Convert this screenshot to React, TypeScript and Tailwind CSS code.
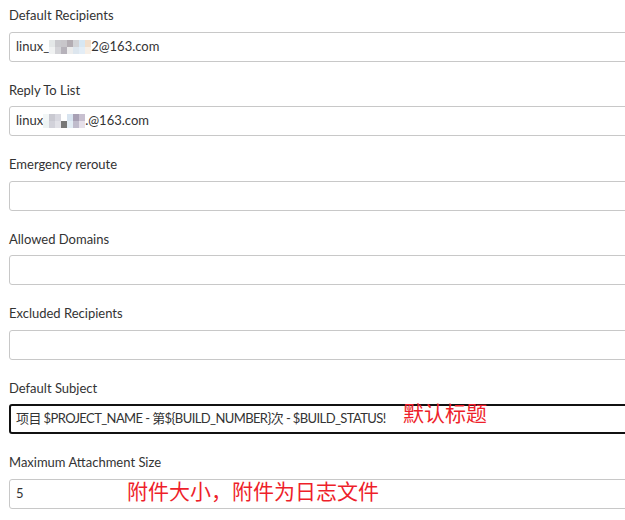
import React from "react";

function Mosaic({ top, bottom }: { top: string[]; bottom: string[] }) {
  return (
    <span className="inline-flex flex-col align-middle">
      <span className="flex">
        {top.map((c, i) => (
          <span key={i} className="block h-[7px] w-[6px]" style={{ background: c }} />
        ))}
      </span>
      <span className="flex">
        {bottom.map((c, i) => (
          <span key={i} className="block h-[7px] w-[6px]" style={{ background: c }} />
        ))}
      </span>
    </span>
  );
}

function Field({
  label,
  children,
  focused,
  annotation,
}: {
  label: string;
  children?: React.ReactNode;
  focused?: boolean;
  annotation?: React.ReactNode;
}) {
  return (
    <div className="relative mb-[19px]">
      <div className="text-[13px] leading-[19.5px] text-[#333] mb-[6px]">{label}</div>
      <div
        className={
          focused
            ? "h-[30px] w-[700px] rounded-[3px] border-2 border-[#111] px-[5px] flex items-center text-[13px] text-[#333] whitespace-nowrap"
            : "h-[30px] w-[700px] rounded-[3px] border border-[#c8c8c8] px-[6px] flex items-center text-[13px] text-[#333] whitespace-nowrap"
        }
      >
        {children}
      </div>
      {annotation}
    </div>
  );
}

export default function App() {
  return (
    <div className="w-[625px] h-[520px] overflow-hidden bg-white pt-[6px] pl-[9px] font-['Lato','Noto_Sans_CJK_SC',sans-serif]">
      <Field label="Default Recipients">
        <span>linux_</span>
        <Mosaic
          top={["#e4e8e8", "#c9c9cd", "#c8c6ca", "#b3adb3", "#d2d3d6", "#d7e7f3", "#f2dfcc"]}
          bottom={["#f0f2f2", "#d3d3d7", "#b6b2ba", "#ececec", "#dde6ee", "#e3edf6", "#f7efe6"]}
        />
        <span>2@163.com</span>
      </Field>
      <Field label="Reply To List">
        <span>linux</span>
        <Mosaic
          top={["#f2f6f6", "#c9c9d1", "#d8d8e0", "#ffffff", "#d8e4f0", "#a8a0b4", "#c8c0d0"]}
          bottom={["#eef4f4", "#d2d2da", "#e2e2e8", "#777777", "#e2ecf4", "#c0bccc", "#e6e0ea"]}
        />
        <span>.@163.com</span>
      </Field>
      <Field label="Emergency reroute" />
      <Field label="Allowed Domains" />
      <Field label="Excluded Recipients" />
      <Field
        label="Default Subject"
        focused
        annotation={
          <div className="absolute left-[394px] top-[23px] text-[21px] leading-none text-[#ee1f2b] font-['Noto_Sans_CJK_SC',sans-serif]">
            默认标题
          </div>
        }
      >
        <span className="tracking-[-0.6px]">
          项目 $PROJECT_NAME - 第${"{"}BUILD_NUMBER{"}"}次 - $BUILD_STATUS!
        </span>
      </Field>
      <Field
        label="Maximum Attachment Size"
        annotation={
          <div className="absolute left-[118px] top-[27px] text-[21px] leading-none text-[#ee1f2b] font-['Noto_Sans_CJK_SC',sans-serif]">
            附件大小，附件为日志文件
          </div>
        }
      >
        5
      </Field>
    </div>
  );
}
